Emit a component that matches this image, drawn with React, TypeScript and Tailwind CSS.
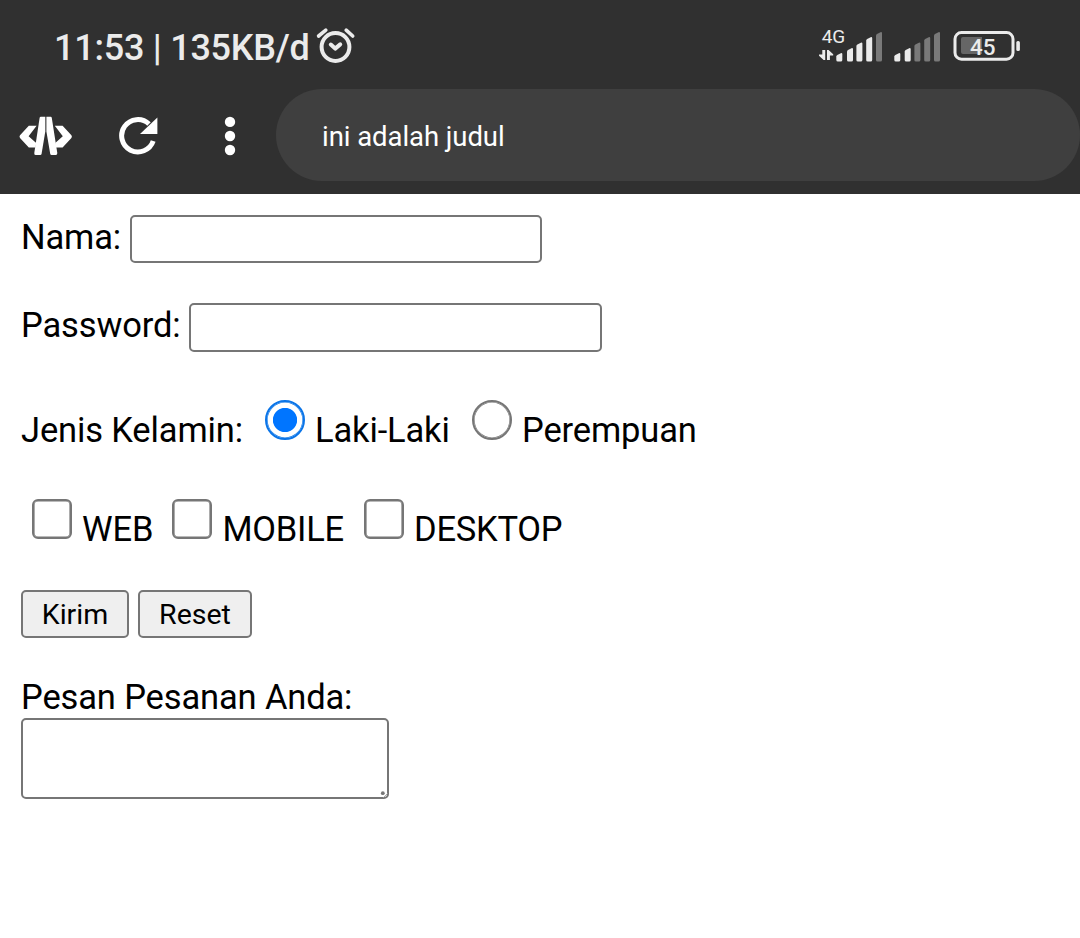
import React from "react";

function AlarmIcon() {
  return (
    <svg className="ml-[6px] h-[38px] w-[40px] shrink-0" viewBox="316 26 40 38" fill="none" stroke="#ebebeb" strokeLinecap="round" strokeLinejoin="round">
      <circle cx="335.5" cy="47" r="13.9" strokeWidth="4" />
      <path d="M318.6 36 L325.8 30.2 M346.2 30.2 L352.7 36" strokeWidth="3.6" />
      <path d="M330.8 44.6 L335.2 48.6 L340.2 44.4" strokeWidth="4" />
    </svg>
  );
}

function Signals() {
  const bar = (x: number, top: number, on: boolean) => (
    <path
      key={x}
      d={`M${x} ${top + 3.5} Q${x} ${top + 2.5} ${x + 1} ${top + 2} L${x + 5} ${top} Q${x + 6} ${top} ${x + 6} ${top + 1} V60 Q${x + 6} 61.6 ${x + 4.4} 61.6 H${x + 1.6} Q${x} 61.6 ${x} 60 Z`}
      fill={on ? "#ebebeb" : "#797979"}
    />
  );
  return (
    <svg className="h-[46px] w-[124px] shrink-0" viewBox="818 20 124 46">
      <text x="821.8" y="43" fontSize="19" fill="#ebebeb" fontFamily="Roboto, sans-serif">4G</text>
      <path d="M822.3 50 H825.2 V60 H823.6 L819 55.8 V54.4 H822.3 Z M827 50 H828.6 L833.2 54.2 V55.6 H829.9 V60 H827 Z" fill="#ebebeb" />
      {[bar(836.3, 53, true), bar(847, 48, true), bar(856.4, 42.5, true), bar(866.2, 37, true), bar(876, 32, false)]}
      {[bar(894.3, 53, true), bar(904.7, 48, true), bar(914.4, 42.5, false), bar(924.2, 37, false), bar(934, 32, false)]}
    </svg>
  );
}

function Battery() {
  return (
    <svg className="ml-[11px] h-[32px] w-[68px] shrink-0" viewBox="953 30 68 32">
      <rect x="955" y="32.6" width="58" height="26.6" rx="6.5" fill="none" stroke="#ebebeb" strokeWidth="3" />
      <path d="M963 37 H982 V54 H963 Q961 54 961 52 V39 Q961 37 963 37 Z" fill="#666666" />
      <rect x="1016.3" y="41" width="3.6" height="10" rx="1.5" fill="#ebebeb" />
      <text x="970" y="55" fontSize="22.5" fontWeight="500" fill="#ebebeb" fontFamily="Roboto, sans-serif" textLength="25.5">45</text>
    </svg>
  );
}

function CodeIcon() {
  return (
    <svg className="h-[40px] w-[54px]" viewBox="19 116 54 40" fill="#fff">
      <path d="M28.8 125.8 H36.6 L28.6 136.3 L36.2 143 L35.6 147.5 H28.8 L20 138 Q19 136.5 20 135.2 Z" />
      <path d="M62.6 125.8 H54.8 L62.8 136.3 L55.2 143 L55.8 147.5 H62.6 L71.4 138 Q72.4 136.5 71.4 135.2 Z" />
      <path d="M40.8 116.8 H45.3 V131.5 L41.6 153.8 Q41.4 155 40.2 155 H35.5 Q34 155 34.3 153 L39.6 118 Q39.8 116.8 40.8 116.8 Z" />
      <path d="M50.7 116.8 H46.4 V131.5 L50.2 153.8 Q50.4 155 51.6 155 H55.8 Q57.4 155 57.3 153 L51.8 118 Q51.6 116.8 50.7 116.8 Z" />
    </svg>
  );
}

function ReloadIcon() {
  return (
    <svg className="h-[40px] w-[42px]" viewBox="118 116 42 40">
      <path d="M153.2 141 A16.2 16.2 0 1 1 149 124" fill="none" stroke="#fff" strokeWidth="5" />
      <path d="M157.4 117.5 V134 H140 Z" fill="#fff" />
    </svg>
  );
}

function DotsIcon() {
  return (
    <svg className="h-[40px] w-[12px]" viewBox="224 116 12 40" fill="#fff">
      <circle cx="230" cy="121.9" r="5.2" />
      <circle cx="230" cy="136" r="5.2" />
      <circle cx="230" cy="150" r="5.2" />
    </svg>
  );
}

const field = "rounded-[5px] border-2 border-[#767676] bg-white outline-none";
const radio = "flex h-10 w-10 shrink-0 appearance-none rounded-full border-2 bg-white";
const box = "h-10 w-10 shrink-0 appearance-none rounded-[6px] border-2 border-[#767676] bg-white shadow-[inset_0_0_0_0.6px_#767676]";
const button = "h-12 rounded-[5px] border-2 border-[#767676] bg-[#efefef] text-[28.5px] leading-[45px] tracking-normal";

export default function App() {
  return (
    <div className="h-[938px] w-[1080px] overflow-hidden bg-white font-[Roboto,sans-serif] text-[34.5px] leading-[42px] tracking-[-0.14px] text-black">
      <header className="h-[194px] bg-[#303030]">
        <div className="flex h-[89px] items-start pl-[54px]">
          <div className="flex items-start">
            <span className="w-[256px] pt-[27px] text-[36px] font-medium tracking-[-0.25px] whitespace-nowrap text-[#ebebeb]">11:53 | 135KB/d</span>
            <div className="pt-[26px]"><AlarmIcon /></div>
          </div>
          <div className="mr-[59px] ml-auto flex items-start">
            <div className="pt-[20px]"><Signals /></div>
            <div className="pt-[30px]"><Battery /></div>
          </div>
        </div>
        <div className="flex h-[92px]">
          <div className="flex w-[276px] pt-[27px] pl-[19px]">
            <button className="h-10 w-[54px]"><CodeIcon /></button>
            <button className="ml-[45px] h-10 w-[42px]"><ReloadIcon /></button>
            <button className="ml-[64px] h-10 w-[12px]"><DotsIcon /></button>
          </div>
          <div className="flex h-[92px] flex-1 items-center rounded-full bg-[#3f3f3f] pl-[46px] text-[27.5px] tracking-[-0.06px] text-white">
            <span className="pt-[4px]">ini adalah judul</span>
          </div>
        </div>
      </header>

      <form className="pt-[21px] pl-[21px]" onSubmit={(e) => e.preventDefault()}>
        <div className="flex h-[48px]">
          <label className="w-[109px] pt-[1px]">Nama:</label>
          <input className={`${field} h-[48px] w-[412px]`} />
        </div>
        <div className="mt-[40px] flex h-[49px]">
          <label className="w-[168px] pt-[1px]">Password:</label>
          <input type="password" className={`${field} h-[49px] w-[413px]`} />
        </div>
        <div className="mt-[48px] flex h-[52px]">
          <span className="w-[244px] pt-[9px]">Jenis Kelamin:</span>
          <label className="flex w-[207px]">
            <input type="radio" name="jk" defaultChecked className={`${radio} border-[#0b75e8] bg-[radial-gradient(circle,#0075ff_11.7px,white_12.5px)] shadow-[inset_0_0_0_0.6px_#0b75e8]`} />
            <span className="pt-[9px] pl-[10px]">Laki-Laki</span>
          </label>
          <label className="flex">
            <input type="radio" name="jk" className={`${radio} border-[#767676] shadow-[inset_0_0_0_0.6px_#767676]`} />
            <span className="pt-[9px] pl-[10px]">Perempuan</span>
          </label>
        </div>
        <div className="mt-[47px] flex h-[52px] pl-[11px]">
          <label className="flex w-[140px]">
            <input type="checkbox" className={box} />
            <span className="pt-[9px] pl-[10px]">WEB</span>
          </label>
          <label className="flex w-[192px]">
            <input type="checkbox" className={box} />
            <span className="pt-[9px] pl-[10.5px] tracking-[-0.25px]">MOBILE</span>
          </label>
          <label className="flex">
            <input type="checkbox" className={box} />
            <span className="pt-[9px] pl-[10px] tracking-[-0.25px]">DESKTOP</span>
          </label>
        </div>
        <div className="mt-[39px] flex gap-[9px]">
          <button type="submit" className={`${button} w-[108px]`}>Kirim</button>
          <button type="reset" className={`${button} w-[114px]`}>Reset</button>
        </div>
        <div className="mt-[38px] flex flex-col">
          <label className="h-[42px]">Pesan Pesanan Anda:</label>
          <div className="relative h-[81px] w-[368px]">
            <textarea className={`${field} block h-[81px] w-[368px] resize-none`} />
            <svg className="absolute right-[1px] bottom-[1px] h-[9px] w-[8px]" viewBox="0 0 8 9">
              <circle cx="2.8" cy="4.2" r="1.9" fill="#767676" />
              <path d="M3.5 8.5 L7.5 4.5" stroke="#aaa" strokeWidth="1" />
            </svg>
          </div>
        </div>
      </form>
    </div>
  );
}
